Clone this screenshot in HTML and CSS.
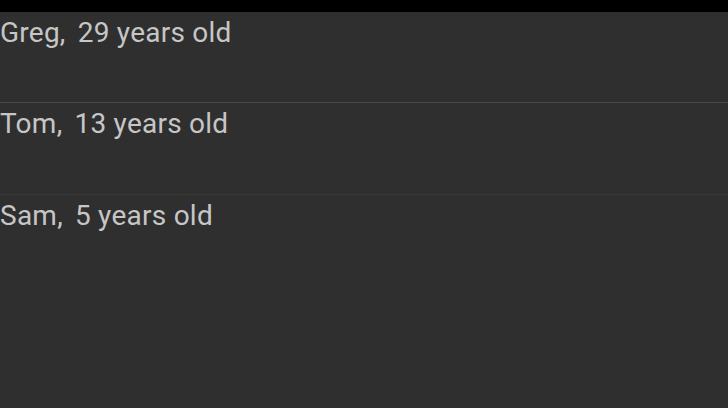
FILE: index.html
```html
<!DOCTYPE html>
<html>
<head>
<meta charset="utf-8">
<link rel="stylesheet" href="styles.css">
</head>
<body>
<div class="statusbar"></div>
<ul class="list">
  <li class="row row-first"><span class="name">Greg,</span><span class="age">29 years old</span></li>
  <li class="row row-second"><span class="name">Tom,</span><span class="age">13 years old</span></li>
  <li class="row"><span class="name">Sam,</span><span class="age">5 years old</span></li>
</ul>
</body>
</html>
```
FILE: styles.css
```css
html, body {
  margin: 0;
  padding: 0;
  height: 100%;
  background: #2f2f2f;
}
body {
  font-family: Roboto, "Noto Sans", sans-serif;
  color: #c6c6c6;
  overflow: hidden;
}
.statusbar {
  height: 12px;
  background: #000;
}
.list {
  list-style: none;
  margin: 0;
  padding: 0;
}
.row {
  height: 86px;
  padding-top: 4px;
  font-size: 28px;
  line-height: 33px;
  letter-spacing: 0.25px;
  display: flex;
}
.row-first {
  border-bottom: 1px solid #4a4a4a;
}
.row-second {
  border-bottom: 1px solid #373737;
  height: 87px;
}
.name {
  margin-right: 12px;
}
```
